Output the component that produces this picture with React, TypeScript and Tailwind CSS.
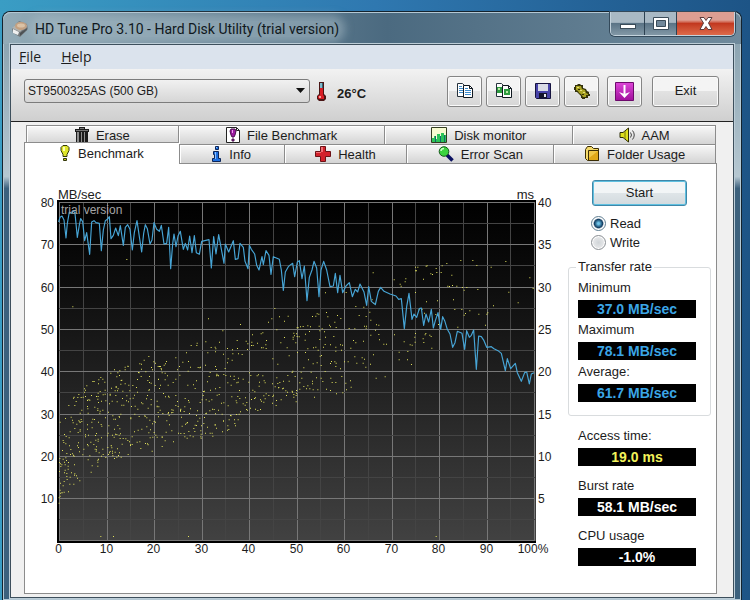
import { useState } from 'react'
import type { ReactNode } from 'react'

const svg = (size: string, box: string, children: ReactNode) => (
    <svg className={`${size} shrink-0`} viewBox={box} aria-hidden="true">
        {children}
    </svg>
)

const AppIcon = () =>
    svg(
        'w-[18px] h-[18px]',
        '0 0 18 18',
        <>
            <path d="M1 9L8 1l8 3 1 5-8 8-7-4z" fill="#73787b" />
            <path d="M1 8l7-6 8 3-7 7z" fill="#b0b2b0" />
            <ellipse cx="10" cy="6" rx="6" ry="4" fill="#c4a181" />
            <ellipse cx="10" cy="5.400" rx="4" ry="2" fill="#dcc3a6" />
            <path d="M2 9l6 3-1 3-5-2z" fill="#eff0f0" />
            <path d="M9 13l7-5v2l-7 6z" fill="#4b4f52" />
        </>
    )

const ThermoIcon = () =>
    svg(
        'w-[10px] h-[19px]',
        '0 0 10 19',
        <>
            <path d="M3 0h5v12l2 2v3l-2 2H3l-2-2v-3l2-2z" fill="#4a1616" />
            <path d="M4 1h3v6H4z" fill="#7fb9cc" />
            <path d="M6 1h1v6H6z" fill="#35606e" />
            <path d="M4 6h3v7l1 1v3H3l-1-1v-2l2-1z" fill="#d81c24" />
            <path d="M3 14h2v2H3z" fill="#f6a0a0" />
        </>
    )

const TrashIcon = () =>
    svg(
        'w-[14px] h-[16px]',
        '0 0 14 16',
        <>
            <path d="M4 0h6v2h4v3h-1v11H1V5H0V2h4z" fill="#1c1c1c" />
            <path d="M1 3h12v1H1zM5 1h4v1H5z" fill="#777" />
            <path d="M2 5h2v10H2zM6 5h1v10H6zM9 5h1v10H9z" fill="#8d8d8d" />
        </>
    )

const FileBenchIcon = () =>
    svg(
        'w-[14px] h-[16px]',
        '0 0 14 16',
        <>
            <path d="M.5.5h10l3 3v12H.5z" fill="#fff" stroke="#222" />
            <path d="M10.500 .5v3h3" fill="none" stroke="#222" />
            <path d="M5 2h4l1 2-1 4-1 2H6L5 8 4 4z" fill="#9c1aa0" stroke="#46104a" />
            <path d="M6 3h1v3H6z" fill="#eba0ee" />
            <path d="M6 12h2v2H6z" fill="#9c1aa0" stroke="#46104a" />
        </>
    )

const MonitorIcon = () =>
    svg(
        'w-4 h-4',
        '0 0 16 16',
        <>
            <path d="M.5.5h15v15H.5z" fill="#f7fbd0" stroke="#333c20" />
            <path d="M1 15v-4h2V9h2v3h1V7h3v4h1V6h3v2h2v7z" fill="#2cc458" />
            <path d="M4 15V9h1v6zM9 15V9h1v6zM13 15V8h1v7z" fill="#116a68" />
        </>
    )

const SpeakerIcon = () =>
    svg(
        'w-4 h-4',
        '0 0 16 16',
        <>
            <path d="M1 5.500h3L9.500 1v14L4 10.500H1z" fill="#dfe01c" stroke="#2c2c06" />
            <path d="M6 4v8" stroke="#77770f" />
            <path d="M11.500 5.500q2 2.500 0 5M13.500 3.500q3.500 4.500 0 9" fill="none" stroke="#444" />
        </>
    )

const BulbIcon = () =>
    svg(
        'w-[10px] h-[17px]',
        '0 0 10 17',
        <>
            <path d="M3 .5h4l2 2v3L7 9.500v2H3v-2L1 5.500v-3z" fill="#dfe62a" stroke="#33360a" />
            <path d="M3 2h2v4H3z" fill="#fbffb4" />
            <path d="M3.500 13.500h3v2h-3z" fill="#c5cc18" stroke="#33360a" />
        </>
    )

const InfoIcon = () =>
    svg(
        'w-[10px] h-[16px]',
        '0 0 10 16',
        <>
            <path d="M3.500.5h3v3h-3zM1.500 5.500h5v7h2v3h-8v-3h2v-4h-1z" fill="#1d6fe0" stroke="#0b2458" />
            <path d="M4 1h1v1H4zM3 6h1v7H3z" fill="#8cc0ff" />
        </>
    )

const HealthIcon = () =>
    svg(
        'w-4 h-4',
        '0 0 16 16',
        <>
            <path d="M5.500.5h5v5h5v5h-5v5h-5v-5h-5v-5h5z" fill="#d3222c" stroke="#6c1216" />
            <path d="M6 1h2v5H6zM1 6h5v1H1z" fill="#ef7076" />
        </>
    )

const ScanIcon = () =>
    svg(
        'w-4 h-4',
        '0 0 16 16',
        <>
            <path d="M9 9l5.500 5.500" stroke="#0b1060" strokeWidth="3.600" />
            <circle cx="6" cy="5.500" r="4.800" fill="#3bd33f" stroke="#175a1c" />
            <path d="M3 5q0-2.500 3-2.500" fill="none" stroke="#c6ffc2" strokeWidth="1.500" />
        </>
    )

const FolderIcon = () =>
    svg(
        'w-4 h-4',
        '0 0 16 16',
        <>
            <path d="M1.500 3.500l2-3h4l2 2h5v12h-11l-2-2z" fill="#f3d96a" stroke="#3a2c04" />
            <path d="M4.500 4.500h10v10h-10z" fill="#e0a818" stroke="#3a2c04" />
            <path d="M5 5h9l-9 7z" fill="#f0c848" />
        </>
    )

const CopyIcon = ({ image = false }: { image?: boolean }) =>
    svg(
        'w-4 h-4',
        '0 0 16 16',
        <>
            <path d="M.5.5h5l2 2v11h-7z" fill="#fff" stroke="#26323c" />
            <path d="M6.500 2.500h6l3 3v9h-9z" fill="#fff" stroke="#101820" />
            <path d="M12.500 2.500v3h3" fill="none" stroke="#101820" />
            {image ? (
                <>
                    <path d="M1 4h5v6H1zM8 6h6v6H8z" fill="#2e9c40" />
                    <path d="M2 5h2v2H2zM10 8h2v2h-2z" fill="#b8e8a0" />
                </>
            ) : (
                <path d="M2 3.500h3M2 5.500h4M2 7.500h4M2 9.500h4M8 5.500h3M8 7.500h6M8 9.500h6M8 11.500h6" stroke="#3f8ccc" />
            )}
        </>
    )

const SaveIcon = () =>
    svg(
        'w-4 h-4',
        '0 0 16 16',
        <>
            <path d="M.5.5h15v15h-14l-1-1z" fill="#4743a8" stroke="#16133f" />
            <path d="M3 1h10v7H3z" fill="#d9dbe6" />
            <path d="M4 10h8v5H4z" fill="#14142c" />
            <path d="M9 11h2v3H9z" fill="#e6e6ee" />
        </>
    )

const SettingsIcon = () =>
    svg(
        'w-4 h-4',
        '0 0 16 16',
        <>
            <path d="M1 2h2l1-1h2l1 1h2v3l3 1 1 2 2 1v2h1v2h-2v2h-3v1h-3v-1H7v-2L5 11 3 9H1V7H0V4h1z" fill="#34320a" />
            <path d="M2 3h5l1 3 3 1 1 3 2 1v1h-2v2h-3l-2-3-2-1-1-2-2-1z" fill="#a9a322" />
            <path d="M3 4h2v1H3zM9 9h2v1H9zM6 7h2v1H6z" fill="#e4e07a" />
            <path d="M4 6h2v1H4zM8 11h2v1H8z" fill="#34320a" />
        </>
    )

const DownIcon = () =>
    svg(
        'w-[19px] h-[19px]',
        '0 0 19 19',
        <>
            <defs>
                <linearGradient id="down" x1="0" y1="0" x2="0" y2="1">
                    <stop offset="0" stopColor="#dd46d8" />
                    <stop offset="1" stopColor="#a0109c" />
                </linearGradient>
            </defs>
            <path d="M.5.5h18v18H.5z" fill="url(#down)" stroke="#6d0a6c" />
            <path d="M9.500 3v11" stroke="#fff" strokeWidth="2" />
            <path d="M4 10l5.500 2 5.500-2-5.500 6z" fill="#fff" />
        </>
    )

// Both traces are stored on a grid three times finer than the chart's pixels.
const speedTrace =
    '56,96 60,82 66,78 72,90 78,144 82,100 88,66 94,70 100,62 105,70 112,142 118,105 122,86 128,95 134,152 140,128 149,193 155,96 162,92 168,98 178,100 184,182 190,120 196,92 202,88 208,80 213,146 220,136 227,114 235,137 241,107 250,166 256,112 263,104 270,118 277,180 283,128 291,92 298,140 305,186 311,130 316,104 322,116 330,162 336,150 342,98 350,118 358,124 364,106 372,162 380,160 386,112 392,236 398,162 402,132 408,170 414,138 421,124 430,178 436,160 443,180 449,138 456,188 463,137 469,188 478,193 485,154 507,149 514,234 521,140 528,192 536,134 543,172 552,220 556,162 566,186 580,152 586,208 594,206 600,160 610,172 615,214 624,236 628,166 634,178 644,192 650,226 657,240 666,200 670,224 678,182 687,196 693,253 700,200 718,208 724,240 730,301 736,246 745,230 752,224 758,220 764,260 772,216 778,212 786,266 793,228 801,332 808,262 816,240 822,214 830,234 837,320 843,240 851,214 860,240 870,290 880,288 886,250 893,308 900,256 908,308 918,288 928,278 937,320 946,298 953,306 960,282 972,306 980,346 986,290 994,334 1006,344 1015,304 1022,292 1032,304 1050,312 1068,318 1076,328 1084,326 1093,416 1100,350 1107,310 1116,388 1122,372 1130,382 1138,356 1144,354 1151,406 1158,372 1166,396 1174,358 1180,414 1186,392 1194,368 1202,418 1208,380 1214,392 1222,418 1230,432 1238,472 1245,458 1252,424 1266,430 1274,478 1280,422 1288,442 1294,436 1301,420 1309,538 1316,438 1324,440 1332,452 1340,472 1354,470 1362,476 1374,482 1384,490 1396,542 1402,506 1412,536 1426,520 1432,548 1444,574 1454,548 1460,546 1468,582 1474,552 1482,548'

const sparseDots =
    '97,349 259,207 504,385 600,402 703,354 684,395 694,385 717,379 743,377 732,392 547,421 590,450 617,452 636,433 662,430 667,427 709,418 634,455 633,465 638,465 678,450 721,457 732,441 452,465 470,458 469,465 438,487 496,454 502,487 512,471 524,470 526,475 525,484 537,455 549,491 561,474 576,478 591,474 594,490 605,492 622,460 621,477 651,458 663,472 668,472 677,474 676,463 740,472 746,496 760,428 758,440 768,430 770,438 773,412 325,498 311,509 340,514 345,518 378,513 406,502 427,515 444,513 375,520 360,528 298,520 262,527 495,524 525,528 563,505 561,517 575,509 577,490 697,505 712,521 478,532 181,1038 219,1038 444,1038 1187,1038 ' +
    '998,247 1125,230 1132,230 1125,241 1128,241 1157,227 1160,226 1187,234 1205,226 1219,219 1261,210 1297,210 1309,225 1352,230 1396,213 1468,262 1478,294 1234,254 1189,246 1202,246 1171,250 1176,252 1096,265 1061,268 1094,274 1149,266 1079,281 1082,287 1125,306 1222,287 1227,288 1236,285 1249,287 1266,291 1271,299 1279,291 1312,297 1405,305 1433,337 1359,346 1191,331 1239,328 1342,367 1339,371 1288,361 1315,371 1275,369 1271,374 1264,357 1243,357 1335,404 1252,410 1158,334 1136,358 1145,356 1152,368 1186,372 1194,402 1154,433 1168,434 1172,438 1148,445 1150,456 1174,473 1156,429 1062,433 1125,429 1124,455 1123,440 1091,454 1109,463 1115,464 1076,485 1102,483 1076,508 1101,508 1113,522 1007,563 1034,559 ' +
    '917,306 995,328 855,307 1000,338 956,375 946,348 970,350 977,378 988,365 991,389 972,407 943,415 926,414 978,407 1015,404 1008,403 1005,419 1015,432 991,434 1017,448 1030,461 1038,461 977,413 939,450 931,473 946,457 969,452 999,493 943,499 965,502 972,506 949,518 968,518 976,530 990,521 923,514 891,375 858,366 862,379 830,370 826,377 816,378 835,371 901,384 883,395 870,409 887,411 867,404 845,415 836,407 810,409 802,406 788,408 780,409 770,412 762,436 758,446 776,439 766,457 795,431 794,449 807,423 838,421 855,440 852,424 838,447 854,462 849,470 870,463 880,438 900,463 906,464 886,470 886,482 903,479 819,472 826,470 833,479 802,475 795,486 771,486 839,497 843,495 804,508 818,520 830,517 842,525 873,513 883,514 887,518 886,528 870,519 912,514 790,532 900,535 ' +
    '755,546 782,545 812,545 854,543 828,562 784,563 816,572 842,563 847,573 871,563 875,576 886,576 904,558 916,578 930,571 932,590 816,580 802,586 790,588 778,577 778,596 798,595 808,595 818,598 832,598 858,596 870,600 918,598 768,600 755,602 822,620 888,610 907,607 760,612'

// [x, top, bottom] of the crowded part of the access time cloud
const cloud = [
    [56, 690, 945],
    [100, 620, 895],
    [150, 565, 850],
    [200, 535, 810],
    [340, 515, 785],
    [420, 525, 745],
    [520, 530, 745],
    [620, 535, 690],
    [700, 545, 655],
    [775, 540, 635],
]

const inCloud = (x: number, y: number) => {
    const i = Math.max(1, cloud.findIndex((c) => c[0] >= x))
    const [x0, t0, b0] = cloud[i - 1]
    const [x1, t1, b1] = cloud[i]
    const k = (x - x0) / (x1 - x0)
    return y > t0 + (t1 - t0) * k && y < b0 + (b1 - b0) * k
}

const makeDots = () => {
    let seed = 90210
    const next = () => {
        seed = (seed + 0x6d2b79f5) | 0
        let t = Math.imul(seed ^ (seed >>> 15), 1 | seed)
        t = (t + Math.imul(t ^ (t >>> 7), 61 | t)) ^ t
        return ((t ^ (t >>> 14)) >>> 0) / 4294967296
    }
    const dots = sparseDots.split(' ').map((p) => p.split(',').map(Number))
    const total = dots.length + 540
    while (dots.length < total) {
        const x = Math.round(56 + Math.pow(next(), 1.2) * 715)
        const y = Math.round(515 + next() * 430)
        if (inCloud(x, y)) dots.push([x, y])
    }
    return dots.map(([x, y]) => `M${x} ${y}h3v3h-3z`).join('')
}

const dotPath = makeDots()
const steps = Array.from({ length: 21 }, (_, i) => i)
const gridX = (i: number) => Math.round(23 + i * 23.75) + 0.5
const gridY = (i: number) => Math.round(16 + i * 21.15) + 0.5

const Chart = () => (
    <svg
        className="w-full h-auto font-['Liberation_Sans',Arial,sans-serif] text-[12px]"
        viewBox="0 0 520 372"
        role="img"
        aria-label="Transfer rate and access time"
    >
        <defs>
            <linearGradient id="plot" x1="0" y1="0" x2="0" y2="1">
                <stop offset="0" stopColor="#000" />
                <stop offset="0.25" stopColor="#0d0d0d" />
                <stop offset="1" stopColor="#424242" />
            </linearGradient>
        </defs>
        <rect x="21" y="14" width="479" height="343" fill="url(#plot)" />
        {steps.map((i) => (
            <path key={i} d={`M${gridX(i)} 16V355`} stroke={i % 2 ? '#444' : '#777'} />
        ))}
        {steps.slice(0, 17).map((i) => (
            <path key={i} d={`M23 ${gridY(i)}H499`} stroke={i % 2 ? '#444' : '#777'} />
        ))}
        <path d="M21 15H500M22 14V357M21 356H500" stroke="#000" strokeWidth="2" />
        <g transform="translate(4 4) scale(.33333)">
            <path d={dotPath} fill="#e2e25c" />
            <polyline points={speedTrace} fill="none" stroke="#47a5d6" strokeWidth="3.500" strokeLinejoin="round" />
        </g>
        <text x="25" y="28" fill="#a4a4a4">
            trial version
        </text>
        <g fill="#1c1c1c">
            <text x="22" y="13" className="text-[13px]">
                MB/sec
            </text>
            <text x="498" y="13" textAnchor="end" className="text-[13px]">
                ms
            </text>
            {[80, 70, 60, 50, 40, 30, 20, 10].map((v, i) => (
                <text key={v} x="18" y={gridY(i * 2) + 4} textAnchor="end">
                    {v}
                </text>
            ))}
            {[40, 35, 30, 25, 20, 15, 10, 5].map((v, i) => (
                <text key={v} x="502" y={gridY(i * 2) + 4}>
                    {v}
                </text>
            ))}
            {steps.slice(0, 11).map((i) => (
                <text key={i} x={i === 10 ? 497 : gridX(i * 2) - 1} y="367" textAnchor="middle">
                    {i === 10 ? '100%' : i * 10}
                </text>
            ))}
        </g>
    </svg>
)

const topTabs = [
    { label: 'Erase', icon: <TrashIcon /> },
    { label: 'File Benchmark', icon: <FileBenchIcon /> },
    { label: 'Disk monitor', icon: <MonitorIcon /> },
    { label: 'AAM', icon: <SpeakerIcon /> },
]

const bottomTabs = [
    { label: 'Benchmark', icon: <BulbIcon /> },
    { label: 'Info', icon: <InfoIcon /> },
    { label: 'Health', icon: <HealthIcon /> },
    { label: 'Error Scan', icon: <ScanIcon /> },
    { label: 'Folder Usage', icon: <FolderIcon /> },
]

const tools = [
    { label: 'Copy text', icon: <CopyIcon /> },
    { label: 'Copy screenshot', icon: <CopyIcon image /> },
    { label: 'Save', icon: <SaveIcon /> },
    { label: 'Options', icon: <SettingsIcon /> },
]

const Tab = ({ label, icon, active = false }: { label: string; icon: ReactNode; active?: boolean }) => (
    <button
        role="tab"
        aria-selected={active}
        className={
            active
                ? 'relative z-10 -mt-0.5 -mb-px h-[22px] flex items-center justify-center gap-2 bg-white border-t border-l border-[#8c8c8c]'
                : 'h-[19px] flex items-center justify-center gap-[7px] bg-linear-to-b from-[#f8f8f8] to-[#d4d4d4] border-t border-l border-[#8c8c8c] shadow-[inset_1px_1px_0_#fff]'
        }
    >
        {icon}
        <span className={active ? '' : 'pt-0.5'}>{label}</span>
    </button>
)

const ToolButton = ({ label, children }: { label?: string; children: ReactNode }) => (
    <button
        aria-label={label}
        className={`${label ? 'w-[35px]' : 'w-[67px]'} h-[31px] flex items-center justify-center rounded-[3px] border border-[#858585] bg-linear-to-b from-[#f4f4f4] from-50% via-[#e2e2e2] via-50% to-[#d6d6d6] shadow-[inset_0_0_0_1px_#fafafa]`}
    >
        {children}
    </button>
)

const Reading = ({ label, value, color }: { label: string; value: string; color: string }) => (
    <div>
        <dt className="leading-6">{label}</dt>
        <dd className={`h-[18px] bg-black text-center text-sm leading-[18px] font-bold ${color}`}>{value}</dd>
    </div>
)

const radioClass =
    'appearance-none w-[15px] h-[15px] rounded-full border border-[#8a8f94] bg-radial from-[#d0d4d8] to-[#f4f4f4] shadow-[inset_0_0_0_1px_#fff] checked:border-[#5e7c90] checked:bg-radial checked:from-[#6fc4ea] checked:from-10% checked:via-[#123f63] checked:via-45% checked:to-white checked:to-60%'

export default function App() {
    const [mode, setMode] = useState('Read')

    return (
        <div className="min-h-screen flex bg-linear-to-r from-[#3a9dc4] via-[#2f78b0] to-[#1d5486] pt-[11px] pl-0.5 pr-2 font-['Liberation_Sans',Arial,sans-serif] text-[13px] text-[#1c1c1c]">
            <div className="flex-1 min-w-0 flex flex-col rounded-t-lg border border-b-0 border-[#14232e] bg-[#3c617d] bg-linear-to-b from-[#8ca4b1] from-5% via-[#b5c7d1] via-28% to-[#3c617d] to-30% shadow-[inset_0_0_0_1px_#b4c8d4]">
                <header className="h-8 flex items-start justify-between rounded-t-lg bg-linear-to-r from-[#93abb7] via-[#4b6a80] via-52% to-[#6f8a9c] pl-2 pr-1.5 shadow-[inset_0_1px_0_#b4c8d4]">
                    <h1 className="h-[34px] flex items-center gap-[6px] font-['Roboto','Open_Sans',sans-serif] text-sm whitespace-nowrap text-[#101820]">
                        <AppIcon />
                        <span className="rounded-full bg-[#a9bdc8]/50 shadow-[0_0_8px_6px_rgba(169,189,200,0.5)] leading-4">
                            HD Tune Pro 3.10 - Hard Disk Utility (trial version)
                        </span>
                    </h1>
                    <div className="h-6 flex rounded-b-[5px] border border-t-0 border-[#c3d2dc] overflow-hidden shadow-[0_0_0_1px_#33495a]">
                        <button
                            aria-label="Minimize"
                            className="w-[34px] flex items-end justify-center pb-1.5 border-r border-[#2d4252] bg-linear-to-b from-[#a9b9c4] from-45% via-[#5b7486] via-50% to-[#8298a6]"
                        >
                            <span className="w-4 h-[5px] bg-white border border-[#3b4c59]" />
                        </button>
                        <button
                            aria-label="Maximize"
                            className="w-8 flex items-center justify-center border-r border-[#2d4252] bg-linear-to-b from-[#a9b9c4] from-45% via-[#5b7486] via-50% to-[#8298a6]"
                        >
                            <svg className="w-4 h-[13px]" viewBox="0 0 16 13">
                                <path d="M.5.5h15v12H.5z" fill="#fff" stroke="#3b4c59" />
                                <path d="M3.500 3.500h9v6h-9z" fill="#71889a" stroke="#3b4c59" />
                            </svg>
                        </button>
                        <button
                            aria-label="Close"
                            className="w-[57px] flex items-center justify-center bg-linear-to-b from-[#dd9e92] from-35% via-[#c2381f] via-50% to-[#dd6a4a]"
                        >
                            <svg className="w-[14px] h-[13px]" viewBox="0 0 14 13">
                                <path d="M1 .5h4l2 3 2-3h4L9.500 6l3.500 6.500H9l-2-3-2 3H1L4.500 6z" fill="#fff" stroke="#5c3c3c" />
                            </svg>
                        </button>
                    </div>
                </header>

                <div className="flex-1 mx-[7px] mb-0.5 flex flex-col border border-[#3d4f5c] bg-[#f0f0f0] shadow-[0_0_0_1px_#bccdd7]">
                    <nav className="h-6 flex items-center gap-5 px-2 bg-[#dbe3ed] font-['Open_Sans','Noto_Sans',sans-serif] text-sm">
                        <button>
                            <u>F</u>ile
                        </button>
                        <button>
                            <u>H</u>elp
                        </button>
                    </nav>

                    <div className="h-[53px] flex items-center pl-[13px] pr-3.5 pb-2 bg-linear-to-b from-[#f2f2f2] to-[#cfcfcf] border-b border-[#222]">
                        <div className="relative flex-1">
                            <select
                                aria-label="Drive"
                                className="block w-full h-6 appearance-none rounded-[3px] border border-[#7c7c7c] bg-linear-to-b from-[#f1f1f1] to-[#d6d6d6] pl-[3px] text-[12px]"
                            >
                                <option>ST9500325AS (500 GB)</option>
                            </select>
                            <svg className="absolute right-1 top-[9px] w-[11px] h-1.5 pointer-events-none" viewBox="0 0 11 6">
                                <path d="M1 0h9L5.500 5z" fill="#111" />
                            </svg>
                        </div>
                        <div className="w-[137px] flex items-end gap-[11px] pl-1.5 leading-[14px] font-bold">
                            <ThermoIcon />
                            26°C
                        </div>
                        <div className="flex gap-1">
                            {tools.map((tool) => (
                                <ToolButton key={tool.label} label={tool.label}>
                                    {tool.icon}
                                </ToolButton>
                            ))}
                        </div>
                        <div className="flex gap-2.5 pl-2">
                            <ToolButton label="Tray">
                                <DownIcon />
                            </ToolButton>
                            <ToolButton>Exit</ToolButton>
                        </div>
                    </div>

                    <main className="flex-1 flex flex-col pt-[3px] pl-[13px] pr-4 pb-[3px]">
                        <div role="tablist">
                            <div className="ml-0.5 mr-px grid grid-cols-[152fr_207fr_188fr_143fr] border-r border-[#8c8c8c]">
                                {topTabs.map((tab) => (
                                    <Tab key={tab.label} {...tab} />
                                ))}
                            </div>
                            <div className="mr-px grid grid-cols-[155fr_105fr_123fr_147fr_162fr] border-r border-[#8c8c8c]">
                                {bottomTabs.map((tab) => (
                                    <Tab key={tab.label} {...tab} active={tab.label === 'Benchmark'} />
                                ))}
                            </div>
                        </div>

                        <section className="flex-1 flex items-start gap-3 border border-[#8c8c8c] bg-white pl-[11px] pr-[5px]">
                            <div className="flex-1 min-w-0 pt-[22px]">
                                <Chart />
                            </div>
                            <div className="w-[143px] pt-4">
                                <button className="block mx-auto w-[95px] h-[26px] rounded-[3px] border border-[#3f87a8] bg-linear-to-b from-[#f2f5f6] from-50% via-[#dfe5e8] via-50% to-[#d2dade] shadow-[inset_0_0_0_1px_#5fc0e0]">
                                    Start
                                </button>
                                <div className="pt-2 pl-[23px]">
                                    {['Read', 'Write'].map((m) => (
                                        <label key={m} className="h-[19px] flex items-center gap-1">
                                            <input
                                                type="radio"
                                                name="mode"
                                                checked={mode === m}
                                                onChange={() => setMode(m)}
                                                className={radioClass}
                                            />
                                            {m}
                                        </label>
                                    ))}
                                </div>
                                <fieldset className="mt-1.5 rounded-[3px] border border-[#d9dcde] pl-[9px] pr-[14px] pb-[13px]">
                                    <legend className="-ml-0.5 px-0.5 leading-[18px]">Transfer rate</legend>
                                    <dl>
                                        <Reading label="Minimum" value="37.0 MB/sec" color="text-[#3ba6e6]" />
                                        <Reading label="Maximum" value="78.1 MB/sec" color="text-[#3ba6e6]" />
                                        <Reading label="Average:" value="61.7 MB/sec" color="text-[#3ba6e6]" />
                                    </dl>
                                </fieldset>
                                <dl className="pt-2 pl-2.5 pr-[15px] flex flex-col gap-2">
                                    <Reading label="Access time:" value="19.0 ms" color="text-[#f2f25a]" />
                                    <Reading label="Burst rate" value="58.1 MB/sec" color="text-white" />
                                    <Reading label="CPU usage" value="-1.0%" color="text-white" />
                                </dl>
                            </div>
                        </section>
                    </main>
                </div>
            </div>
        </div>
    )
}
